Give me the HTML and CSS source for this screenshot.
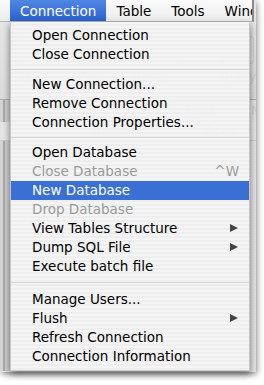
FILE: index.html
```html
<!DOCTYPE html>
<html lang="en">
<head>
    <meta charset="UTF-8">
    <title>Connection Menu</title>
    <link rel="stylesheet" href="styles.css">
</head>
<body>
    <div class="window">
        <div class="menubar">
            <span class="menubar-item active">Connection</span>
            <span class="menubar-item">Table</span>
            <span class="menubar-item">Tools</span>
            <span class="menubar-item">Window</span>
        </div>

        <div class="window-body">
            <div class="toolbar">
                <div class="tool"><div class="tool-icon"></div><span>Table</span></div>
                <div class="tool"><div class="tool-icon grid"></div><span>View</span></div>
                <div class="tool"><div class="tool-icon"></div><span>Stored Proc.</span></div>
                <div class="tool"><div class="tool-icon"></div><span>Query</span></div>
            </div>
            <div class="tabs">
                <span>Open Table</span>
                <span>Design Table</span>
                <span>New Table</span>
            </div>
            <div class="table-head">
                <span>Name</span>
                <span>Rows</span>
            </div>
        </div>

        <ul class="menu">
            <li>Open Connection</li>
            <li>Close Connection</li>
            <li class="separator"></li>
            <li>New Connection...</li>
            <li>Remove Connection</li>
            <li>Connection Properties...</li>
            <li class="separator"></li>
            <li>Open Database</li>
            <li class="disabled">Close Database <span class="shortcut">^W</span></li>
            <li class="selected">New Database</li>
            <li class="disabled">Drop Database</li>
            <li class="submenu">View Tables Structure</li>
            <li class="submenu">Dump SQL File</li>
            <li>Execute batch file</li>
            <li class="separator wide"></li>
            <li>Manage Users...</li>
            <li class="submenu">Flush</li>
            <li>Refresh Connection</li>
            <li>Connection Information</li>
        </ul>
    </div>
</body>
</html>
```

FILE: styles.css
```css
html, body {
    margin: 0;
    padding: 0;
    background-color: #ffffff;
}
body {
    font-family: 'DejaVu Sans', Verdana, sans-serif;
    font-size: 13.5px;
    color: #000;
    width: 264px;
    height: 385px;
    overflow: hidden;
}
.window {
    position: relative;
    width: 256px;
    height: 372px;
    background-color: #e4e4e4;
    box-shadow: 1px 2px 6px rgba(0, 0, 0, 0.45);
}
.menubar {
    display: flex;
    width: 254px;
    height: 22px;
    padding-left: 10px;
    box-sizing: border-box;
    overflow: hidden;
    white-space: nowrap;
    background: linear-gradient(#fbfbfb, #ececec);
    border-right: 2px solid #8a8a8a;
    border-bottom: 1px solid #b8b8b8;
}
.menubar-item {
    padding: 0 10px;
    line-height: 22px;
}
.menubar-item.active {
    color: white;
    background: linear-gradient(#4f86e2, #2d62cf);
}
.window-body {
    height: 349px;
    background: linear-gradient(to right, #d4d4d4 0, #d4d4d4 3px, #a9a9a9 3px, #a9a9a9 5px, #cfcfcf 5px, #cfcfcf 10px, transparent 10px);
}
.toolbar {
    display: flex;
    gap: 24px;
    height: 78px;
    padding: 14px 0 0 18px;
    box-sizing: border-box;
    background: linear-gradient(#e6e6e6, #dcdcdc);
    border-bottom: 1px solid #b0b0b0;
    color: #cdcdcd;
    font-size: 12px;
}
.tool {
    display: flex;
    flex-direction: column;
    align-items: center;
    gap: 6px;
}
.tool-icon {
    width: 30px;
    height: 26px;
    border: 1px solid #d0d0d0;
    border-radius: 3px;
}
.tool-icon.grid {
    background: repeating-linear-gradient(to right, transparent 0, transparent 9px, #d2d2d2 9px, #d2d2d2 10px);
}
.tabs {
    display: flex;
    gap: 36px;
    height: 22px;
    padding-left: 36px;
    line-height: 22px;
    color: #cdcdcd;
    font-size: 12px;
    white-space: nowrap;
    overflow: hidden;
}
.table-head {
    display: flex;
    justify-content: space-between;
    height: 18px;
    padding: 0 20px 0 92px;
    line-height: 18px;
    color: #cdcdcd;
    font-size: 12px;
    background-color: #e6e6e6;
    border-bottom: 1px solid #cfcfcf;
}
.menu {
    position: absolute;
    top: 22px;
    left: 10px;
    width: 240px;
    margin: 0;
    padding: 4px 0 4px 0;
    list-style: none;
    box-sizing: border-box;
    background: repeating-linear-gradient(rgba(246, 246, 246, 0.93) 0, rgba(246, 246, 246, 0.93) 2px, rgba(239, 239, 239, 0.93) 2px, rgba(239, 239, 239, 0.93) 4px);
    box-shadow: 0 3px 7px rgba(0, 0, 0, 0.5);
    border: 1px solid rgba(0, 0, 0, 0.18);
    border-top: none;
}
.menu li {
    position: relative;
    height: 19px;
    line-height: 19px;
    padding-left: 21px;
    white-space: nowrap;
}
.menu li.separator {
    height: 1px;
    margin: 5px 0 5px 0;
    padding: 0;
    background-color: #d6d6d6;
}
.menu li.separator.wide {
    margin: 6px 0 7px 0;
}
.menu li.disabled {
    color: #9b9b9b;
}
.menu li.selected {
    color: white;
    background-color: #3a6fd4;
}
.shortcut {
    position: absolute;
    right: 10px;
}
.menu li.submenu:after {
    content: "";
    position: absolute;
    right: 11px;
    top: 5px;
    border-left: 8px solid #444;
    border-top: 4.5px solid transparent;
    border-bottom: 4.5px solid transparent;
}
```
